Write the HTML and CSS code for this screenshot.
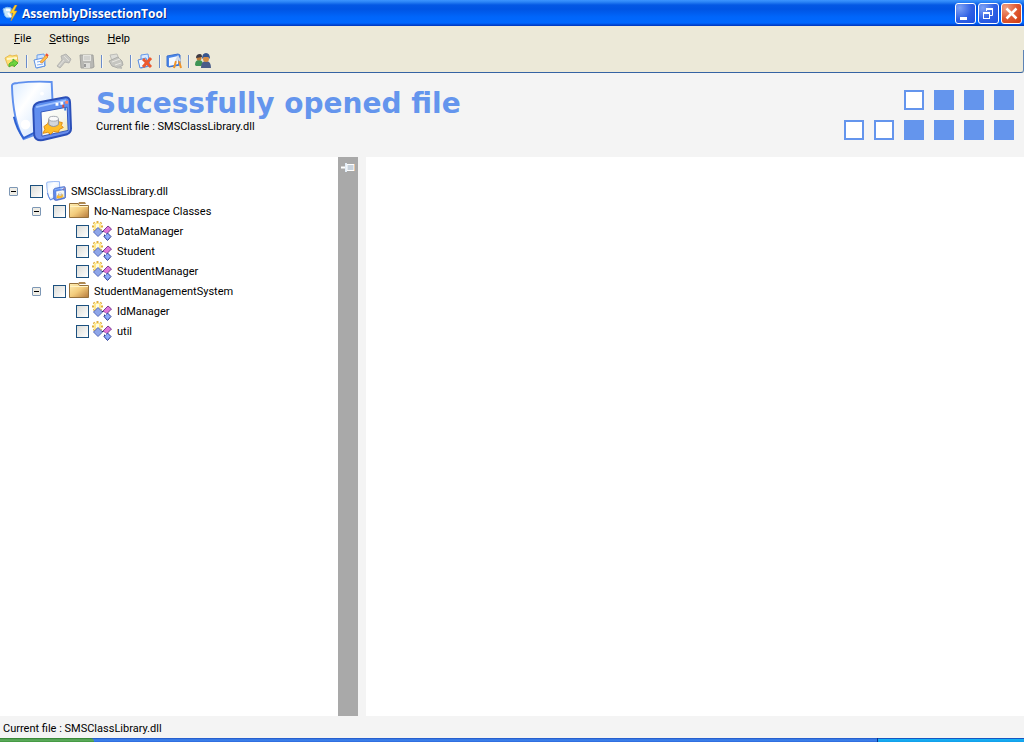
FILE: index.html
```html
<!DOCTYPE html>
<html lang="en">
<head>
  <meta charset="UTF-8">
  <meta name="viewport" content="width=device-width, initial-scale=1.0">
  <title>AssemblyDissectionTool</title>
  <link rel="stylesheet" href="styles.css">
</head>
<body>
  <!-- shared icons -->
  <svg class="defs" aria-hidden="true">
    <defs>
      <linearGradient id="g-page" x1="0" y1="0" x2="1" y2="1">
        <stop offset="0" stop-color="#d9ebff"/><stop offset="0.35" stop-color="#ffffff"/><stop offset="0.7" stop-color="#dcebfe"/><stop offset="1" stop-color="#a9cbf8"/>
      </linearGradient>
      <linearGradient id="g-box" x1="0" y1="0" x2="0" y2="1">
        <stop offset="0" stop-color="#5b8ff0"/><stop offset="1" stop-color="#6a8cec"/>
      </linearGradient>
      <linearGradient id="g-pane" x1="0" y1="0" x2="1" y2="1">
        <stop offset="0" stop-color="#ffffff"/><stop offset="0.6" stop-color="#f4f6ee"/><stop offset="1" stop-color="#f6e48e"/>
      </linearGradient>
      <linearGradient id="g-folder" x1="0" y1="0" x2="1" y2="1">
        <stop offset="0" stop-color="#ffefb4"/><stop offset="0.5" stop-color="#f3cc7c"/><stop offset="1" stop-color="#b5793c"/>
      </linearGradient>
      <symbol id="i-library" viewBox="0 0 64 64">
        <path d="M2 6 Q2 3 8 3 Q24 1 43 2 L44 24 Q44 46 32 54 L14 61 Q3 42 2 6 Z" fill="url(#g-page)" stroke="#5f90ee" stroke-width="2"/>
        <path d="M4 38 Q7 51 14 60 L28 53" fill="none" stroke="#2f62d2" stroke-width="2"/>
        <circle cx="16" cy="46" r="5" fill="#fff"/>
        <circle cx="33" cy="14" r="2" fill="#fff"/>
        <path d="M30 23 L56 18 Q62 17 62 23 L63 50 Q63 54 59 56 L34 62 Q26 63 25 57 L24 30 Q24 25 30 23 Z" fill="url(#g-box)" stroke="#2b4fb8" stroke-width="2"/>
        <path d="M27 28 L58 21" stroke="#9fc2ff" stroke-width="2"/>
        <path d="M32 33 L59 28 L60 52 L33 58 Z" fill="url(#g-pane)" stroke="#3156bb"/>
        <path d="M47 25 h3 M52 24 h3" stroke="#fff" stroke-width="3"/>
        <path d="M57 23 h3" stroke="#ff8461" stroke-width="3"/>
        <path d="M54 27 h2" stroke="#e04c30" stroke-width="3"/>
        <path d="M56 30 h2" stroke="#3a7be0" stroke-width="3"/>
        <path d="M35 48 l4-3 1-3 4 1 4-2 2 2 4 1-1 3 2 2-4 2-1 3-5-1-3 3-3-2-5 1 2-4z" fill="#ffbd28" stroke="#e08a10"/>
        <path d="M40 40 v6 q5 4 10 0 v-6" fill="#d3d6da" stroke="#8c929b"/>
        <ellipse cx="45" cy="40" rx="5" ry="2.500" fill="#fafafa" stroke="#a3a8b0"/>
      </symbol>
      <symbol id="i-folder" viewBox="0 0 20 20">
        <path d="M9 3 L10 1 H16 L17 3 Z" fill="#b08a52"/>
        <path d="M0.500 2.500 H9 L10.500 4.500 H19.500 V16.500 H0.500 Z" fill="url(#g-folder)" stroke="#94703c"/>
        <path d="M1 5.500 H19" stroke="#fff3c4"/>
      </symbol>
      <symbol id="i-class" viewBox="0 0 20 20">
        <path d="M5.500 0v11M0 5.500h11M1.500 1.500l8 8M9.500 1.500l-8 8" stroke="#dfae3c" stroke-width="2"/>
        <rect x="2" y="2" width="7" height="7" fill="#ffe88c"/>
        <rect x="4" y="3" width="3" height="4" fill="#fffbe0"/>
        <path d="M6 6.500l4.500 4.500-4.500 4.500-4.500-4.500z" fill="#8fa6e8" stroke="#5368ba"/>
        <path d="M10 10.500h4M12.500 10.500v5h3" fill="none" stroke="#242b58"/>
        <path d="M16 5l3.500 3-5 5-3.500-3z" fill="#de78da" stroke="#7a3a91"/>
        <path d="M15.500 12l3.500 3.500-3.500 4-3.500-4z" fill="#8cabfa" stroke="#303f99"/>
        <path d="M11 11.500l3 2" stroke="#fff" stroke-width="2"/>
      </symbol>
      <symbol id="i-toggle" viewBox="0 0 9 9">
        <rect x="0.500" y="0.500" width="8" height="8" rx="0.500" fill="#efede6" stroke="#7d97b5"/>
        <path d="M2 4.500h5" stroke="#000"/>
      </symbol>
    </defs>
  </svg>

  <div class="window">
    <div class="titlebar">
      <svg class="app-icon" viewBox="0 0 16 16">
        <path d="M1 4 Q5 1 9 3 L10 12 Q5 14 3 11 L2 8 Z" fill="#c5e7fb" stroke="#7cb8ef"/>
        <path d="M4 5h4M6 8l3 4" stroke="#fff" stroke-width="2"/>
        <path d="M13 0L8 8h3l-2 8 6-10h-3l3-6z" fill="#ffd42a" stroke="#e09212" stroke-width="0.500"/>
      </svg>
      <span class="title">AssemblyDissectionTool</span>
      <div class="window-buttons">
        <button class="win-btn" aria-label="Minimize">
          <svg viewBox="1 1 19 19"><rect x="5" y="14" width="7" height="3" fill="#fff"/></svg>
        </button>
        <button class="win-btn" aria-label="Restore">
          <svg viewBox="1 1 19 19"><path d="M8.500 8V5.500h6v7H12" fill="none" stroke="#fff"/><path d="M8 6h7" stroke="#fff" stroke-width="2"/><rect x="5.500" y="9.500" width="6" height="6" fill="none" stroke="#fff"/><path d="M5 10h7" stroke="#fff" stroke-width="2"/></svg>
        </button>
        <button class="win-btn close" aria-label="Close">
          <svg viewBox="1 1 19 19"><path d="M5.500 5.500l10 10M15.500 5.500l-10 10" stroke="#fff" stroke-width="2.500"/></svg>
        </button>
      </div>
    </div>

    <div class="bars">
      <div class="menubar">
        <button class="menu-item"><u>F</u>ile</button>
        <button class="menu-item"><u>S</u>ettings</button>
        <button class="menu-item"><u>H</u>elp</button>
      </div>
      <div class="toolbar">
        <button class="tool" aria-label="Open">
          <svg viewBox="0 0 16 16"><path d="M1 5l5-3 2 1 5-1 1 7-3 4H4z" fill="#ffdf70" stroke="#e6bb55"/><path d="M3 6l10-1" stroke="#fff8cc" stroke-width="2"/><path d="M5 11q3-3 4-2V6l5 4-4 4v-2q-3 0-5 2z" fill="#70d53c" stroke="#4faf35"/></svg>
        </button>
        <span class="sep"></span>
        <button class="tool" aria-label="Edit">
          <svg viewBox="0 0 16 16"><path d="M4 2l7-1 1 5v7l-8 2z" fill="#cfe2ff" stroke="#6d9fe8"/><path d="M1 7l9-2 2 8-9 2z" fill="#f8fbff" stroke="#5b90e4"/><path d="M4 9l5-1M4 12l6-1" stroke="#82aef0"/><path d="M7 9l6-7 2 2-6 6z" fill="#ffbd45" stroke="#e29a48"/><path d="M13 1l2 2" stroke="#ed4e36" stroke-width="2"/></svg>
        </button>
        <button class="tool" aria-label="Find" disabled>
          <svg viewBox="0 0 16 16"><path d="M5 3l5-2 5 5-2 4-4-1-5 6-3-2 5-6z" fill="#c8c8c4" stroke="#b4b4b0"/><path d="M8 3l5 5M3 13l5-6" stroke="#e2e1db"/></svg>
        </button>
        <button class="tool" aria-label="Save" disabled>
          <svg viewBox="0 0 16 16"><path d="M1 2h13l1 12-2 1H2z" fill="#b8b8b4" stroke="#a2a29e"/><path d="M4 2h8v6H4z" fill="#e4e4e0"/><path d="M5 4h6M5 6h6" stroke="#c2c2be"/><path d="M5 10h6v5H5z" fill="#dededa"/><path d="M6 11v3" stroke="#999" stroke-width="2"/></svg>
        </button>
        <span class="sep"></span>
        <button class="tool" aria-label="Print" disabled>
          <svg viewBox="0 0 16 16"><path d="M2 2l7-1 2 5-7 2z" fill="#deded9" stroke="#bdbdb8"/><path d="M1 8l9-4 4 4 1 4-5 3-6-2z" fill="#c6c6c1" stroke="#adada8"/><path d="M4 9l8-3M7 12l6-2" stroke="#e9e8e2"/><path d="M9 14l5 1" stroke="#bdbdb8" stroke-width="2"/></svg>
        </button>
        <span class="sep"></span>
        <button class="tool" aria-label="Remove">
          <svg viewBox="0 0 16 16"><path d="M4 2l7-1 2 12-9 2z" fill="#d9e9ff" stroke="#6598ea"/><path d="M1 7l8-2 2 8-8 2z" fill="#f5f9ff" stroke="#5389e0"/><path d="M6 6l8 8M14 5l-8 9" stroke="#ec5a2e" stroke-width="3"/></svg>
        </button>
        <span class="sep"></span>
        <button class="tool" aria-label="Options">
          <svg viewBox="0 0 16 16"><path d="M1 3l11-2 2 1v10L3 14l-2-1z" fill="#4b86e8" stroke="#3a70d0"/><path d="M3 5l9-2v8l-9 2z" fill="#f4f9ff"/><path d="M8 15l2-7M15 15l-2-7" stroke="#f09428" stroke-width="2"/><path d="M10 8l2-4 2 4" fill="none" stroke="#d3dae6" stroke-width="2"/></svg>
        </button>
        <span class="sep"></span>
        <button class="tool" aria-label="Users">
          <svg viewBox="0 0 16 16"><path d="M0 12q0-5 4-5t4 5l-2 1H1z" fill="#3d9454"/><circle cx="4" cy="5" r="2.500" fill="#bd7939"/><path d="M1 5q0-4 4-4 2 0 2 3z" fill="#3d3a43"/><path d="M6 15q0-7 5-7t5 7z" fill="#4a5c88"/><circle cx="11" cy="6" r="3" fill="#d58c43"/><path d="M7 6q0-6 4-6t4 6l-2-2H9z" fill="#36558d"/></svg>
        </button>
      </div>
    </div>

    <header class="header">
      <svg class="logo"><use href="#i-library"/></svg>
      <div class="heading">
        <h1>Sucessfully opened file</h1>
        <p>Current file : SMSClassLibrary.dll</p>
      </div>
      <div class="squares">
        <div class="square-row">
          <i class="square empty"></i><i class="square"></i><i class="square"></i><i class="square"></i>
        </div>
        <div class="square-row">
          <i class="square empty"></i><i class="square empty"></i><i class="square"></i><i class="square"></i><i class="square"></i><i class="square"></i>
        </div>
      </div>
    </header>

    <main class="content">
      <nav class="tree">
        <ul>
          <li>
            <div class="node">
              <button class="toggle" aria-label="Collapse"><svg><use href="#i-toggle"/></svg></button>
              <input type="checkbox" id="n1"><svg class="icon"><use href="#i-library"/></svg><label for="n1">SMSClassLibrary.dll</label>
            </div>
            <ul>
              <li>
                <div class="node">
                  <button class="toggle" aria-label="Collapse"><svg><use href="#i-toggle"/></svg></button>
                  <input type="checkbox" id="n2"><svg class="icon"><use href="#i-folder"/></svg><label for="n2">No-Namespace Classes</label>
                </div>
                <ul>
                  <li><div class="node leaf"><input type="checkbox" id="n3"><svg class="icon"><use href="#i-class"/></svg><label for="n3">DataManager</label></div></li>
                  <li><div class="node leaf"><input type="checkbox" id="n4"><svg class="icon"><use href="#i-class"/></svg><label for="n4">Student</label></div></li>
                  <li><div class="node leaf"><input type="checkbox" id="n5"><svg class="icon"><use href="#i-class"/></svg><label for="n5">StudentManager</label></div></li>
                </ul>
              </li>
              <li>
                <div class="node">
                  <button class="toggle" aria-label="Collapse"><svg><use href="#i-toggle"/></svg></button>
                  <input type="checkbox" id="n6"><svg class="icon"><use href="#i-folder"/></svg><label for="n6">StudentManagementSystem</label>
                </div>
                <ul>
                  <li><div class="node leaf"><input type="checkbox" id="n7"><svg class="icon"><use href="#i-class"/></svg><label for="n7">IdManager</label></div></li>
                  <li><div class="node leaf"><input type="checkbox" id="n8"><svg class="icon"><use href="#i-class"/></svg><label for="n8">util</label></div></li>
                </ul>
              </li>
            </ul>
          </li>
        </ul>
      </nav>
      <div class="splitter">
        <button class="pin" aria-label="Pin">
          <svg viewBox="0 0 14 9"><path d="M0 4.500h5" stroke="#fff" stroke-width="2"/><path d="M5 0v9" stroke="#e3edf7" stroke-width="2"/><path d="M6 1.500h7v6H6z" fill="#c9d3dd" stroke="#fff"/><path d="M13.500 1v7" stroke="#e8c7a4"/></svg>
        </button>
      </div>
      <section class="view"></section>
    </main>

    <footer class="statusbar">Current file : SMSClassLibrary.dll</footer>
    <div class="taskbar">
      <div class="start"></div>
      <div class="tasks"></div>
      <div class="tray"></div>
    </div>
  </div>

  <script>
    document.querySelectorAll('.toggle').forEach((toggle) => {
      toggle.addEventListener('click', () => {
        toggle.closest('li').classList.toggle('collapsed');
      });
    });
  </script>
</body>
</html>
```
FILE: styles.css
```css
* {
  margin: 0;
  padding: 0;
  box-sizing: border-box;
}

body, html {
  height: 100%;
  overflow: hidden;
}

body {
  font-family: Roboto, "Liberation Sans", sans-serif;
  font-size: 11px;
  line-height: 14px;
  color: #000;
}

button {
  border: none;
  background: none;
  font: inherit;
  color: inherit;
}

svg {
  display: block;
}

.defs {
  position: absolute;
  width: 0;
  height: 0;
}

.window {
  display: flex;
  flex-direction: column;
  height: 100vh;
  background: #f4f4f4;
}

/* title bar */
.titlebar {
  display: flex;
  align-items: center;
  gap: 4px;
  height: 26px;
  padding: 0 2px;
  background: linear-gradient(#3d95ff 0, #2a83f5 2px, #0458e4 5px, #0054e3 9px, #0066fb 17px, #0068ff 23px, #0043cf 25px, #0037ba 26px);
}

.app-icon {
  width: 16px;
  height: 16px;
}

.title {
  flex: 1;
  padding-top: 2px;
  font-family: "Open Sans", sans-serif;
  font-size: 12px;
  font-weight: bold;
  color: #fff;
  text-shadow: 1px 1px 0 #0b2a8a;
}

.window-buttons {
  display: flex;
  gap: 2px;
}

.win-btn {
  width: 21px;
  height: 21px;
  border: 1px solid #fff;
  border-radius: 3px;
  background: radial-gradient(circle at 20% 20%, #7ea2f5, #2f60e4 55%, #1c4fe0);
}

.win-btn svg {
  width: 19px;
  height: 19px;
}

.win-btn.close {
  background: radial-gradient(circle at 20% 20%, #f0a184, #e05a34 50%, #cc3a10);
}

/* menu and toolbar */
.bars {
  background: #ece9d8;
}

.menubar {
  display: flex;
  gap: 18px;
  height: 24px;
  padding: 2px 14px 0;
  align-items: center;
}

.toolbar {
  display: flex;
  align-items: center;
  gap: 5px;
  height: 23px;
  padding: 0 3px;
  border-bottom: 1px solid #3563a3;
  border-right: 1px solid #5d83b5;
  border-bottom-right-radius: 3px;
}

.tool {
  display: flex;
  width: 18px;
  padding-left: 1px;
}

.tool svg {
  width: 16px;
  height: 16px;
}

.sep {
  width: 1px;
  height: 13px;
  background: #6a8ccb;
  box-shadow: 1px 0 0 #f8f7f0;
}

/* header */
.header {
  display: flex;
  align-items: center;
  height: 84px;
  padding: 0 10px;
}

.logo {
  width: 62px;
  height: 62px;
  margin-bottom: 8px;
}

.heading {
  flex: 1;
  padding-left: 24px;
  margin-bottom: 8px;
}

.heading h1 {
  font-family: "DejaVu Sans", sans-serif;
  font-size: 28px;
  line-height: 32px;
  font-weight: bold;
  color: #6495ed;
}

.squares {
  display: flex;
  flex-direction: column;
  align-items: flex-end;
  gap: 10px;
}

.square-row {
  display: flex;
  gap: 10px;
}

.square {
  width: 20px;
  height: 20px;
  background: #6495ed;
}

.square.empty {
  border: 2px solid #6495ed;
  background: #fff;
}

/* tree */
.content {
  flex: 1;
  display: flex;
  min-height: 0;
}

.tree {
  width: 33%;
  padding: 24px 9px;
  background: #fff;
  overflow: auto;
}

.tree ul {
  list-style: none;
}

.tree ul ul {
  padding-left: 23px;
}

.collapsed > ul {
  display: none;
}

.node {
  display: flex;
  align-items: center;
  height: 20px;
}

.node.leaf {
  padding-left: 21px;
}

.node label {
  padding-top: 2px;
}

.toggle {
  margin-right: 12px;
}

.toggle svg {
  width: 9px;
  height: 9px;
}

.node input {
  appearance: none;
  width: 13px;
  height: 13px;
  border: 1px solid #1c5180;
  background: linear-gradient(135deg, #dcdcd7, #fff);
}

.node input:checked {
  background: #21a121;
}

.icon {
  width: 20px;
  height: 20px;
  margin: 0 5px 0 3px;
}

.splitter {
  width: 20px;
  padding: 5px 3px;
  background: #a9a9a9;
}

.pin svg {
  width: 14px;
  height: 9px;
}

.view {
  flex: 1;
  margin-left: 8px;
  background: #fff;
}

/* status and taskbar */
.statusbar {
  height: 22px;
  padding: 6px 3px 0;
}

.taskbar {
  display: flex;
  height: 4px;
  background: linear-gradient(#1f53c4, #3f86ee 2px, #2c68dc);
}

.start {
  width: 94px;
  background: linear-gradient(#2c7a2c, #63b062 2px, #3c943b);
  border-top-right-radius: 4px;
}

.tasks {
  flex: 1;
}

.tray {
  width: 147px;
  border-left: 1px solid #0b2f8a;
  background: linear-gradient(#1457c2 1px, #18b4f5 1px, #129de9);
}
```
